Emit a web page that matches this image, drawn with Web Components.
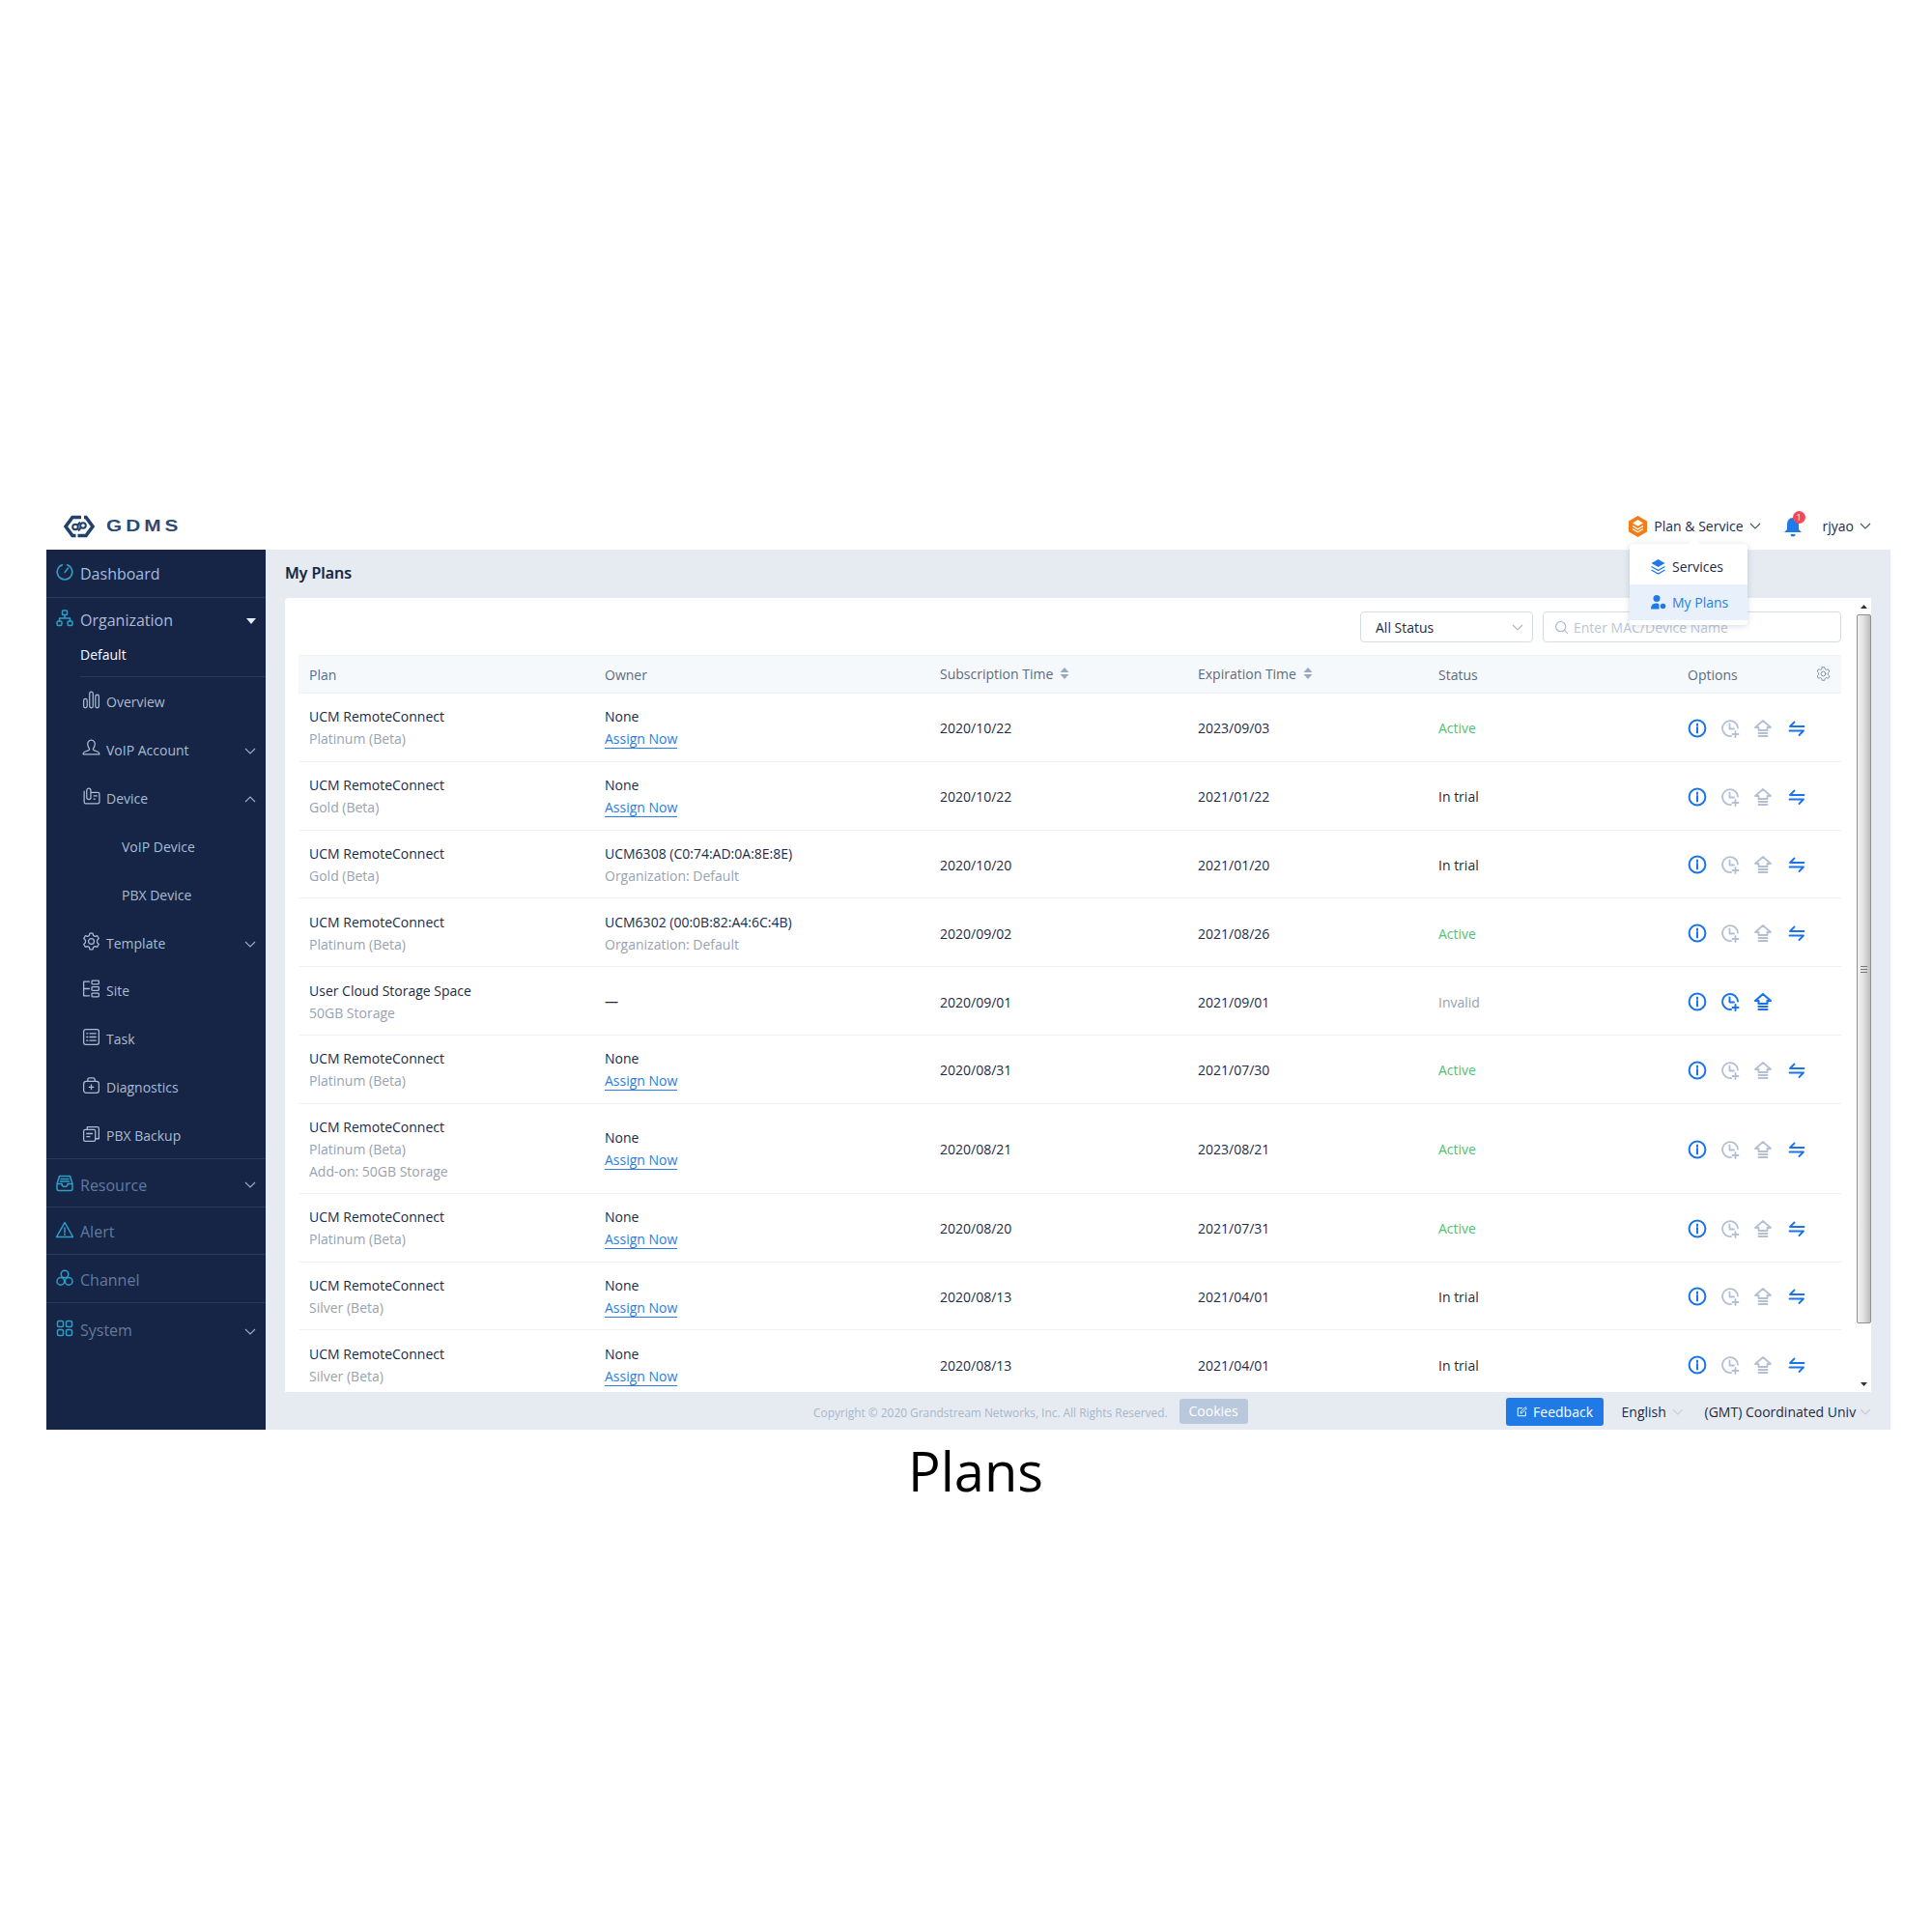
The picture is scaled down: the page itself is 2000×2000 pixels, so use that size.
<!DOCTYPE html>
<html>
<head>
<meta charset="utf-8">
<title>Plans</title>
<style>
    html, body { margin: 0; background: #fff; }
    body { font-family: 'Open Sans', sans-serif; color: #1c2b45; min-height: 2000px; }
</style>
</head>
<body>
<gdms-shell>
    <top-bar slot="top"></top-bar>
    <side-nav slot="side">
        <side-item icon="gauge" kind="top" h="50">Dashboard</side-item>
        <side-item icon="org" kind="top" h="40" chevron="caret" line="none" pt="5">Organization</side-item>
        <side-item kind="current" h="42">Default</side-item>
        <side-item icon="bars" kind="sub" h="50">Overview</side-item>
        <side-item icon="person" kind="sub" h="50" chevron="down" pt="1">VoIP Account</side-item>
        <side-item icon="device" kind="sub" h="50" chevron="up">Device</side-item>
        <side-item kind="leaf" h="50">VoIP Device</side-item>
        <side-item kind="leaf" h="50">PBX Device</side-item>
        <side-item icon="gear" kind="sub" h="49" chevron="down" pt="1">Template</side-item>
        <side-item icon="site" kind="sub" h="50">Site</side-item>
        <side-item icon="task" kind="sub" h="50">Task</side-item>
        <side-item icon="kit" kind="sub" h="50">Diagnostics</side-item>
        <side-item icon="copy" kind="sub" h="50" line="full">PBX Backup</side-item>
        <side-item icon="inbox" kind="dim" h="50" chevron="down" line="full" pt="4">Resource</side-item>
        <side-item icon="alert" kind="dim" h="49" line="full" pt="0">Alert</side-item>
        <side-item icon="rings" kind="dim" h="50" line="full" pt="2">Channel</side-item>
        <side-item icon="grid" kind="dim" h="56" chevron="down" line="none" pt="0">System</side-item>
    </side-nav>
    <plans-page slot="main"></plans-page>
    <page-footer slot="foot"></page-footer>
    <plan-menu slot="over"></plan-menu>
</gdms-shell>
<page-caption>Plans</page-caption>

<script>
// Stroke icons, all on a 20x20 box unless the caller passes another one.
const ICONS = {
    gauge: '<path d="M12.500 2.800a7.800 7.800 0 1 1-5 0"/><path d="M10 10.500 13.500 6"/>',
    org: '<rect x="7.500" y="2" width="5" height="4.500" rx=".8"/><rect x="2" y="13" width="5" height="4.500" rx="1.500"/><rect x="13" y="13" width="5" height="4.500" rx="1.500"/><path d="M10 6.500V10M4.500 13v-3h11v3"/>',
    bars: '<rect x="2.500" y="9" width="3.400" height="9" rx="1.700"/><rect x="8.300" y="2" width="3.400" height="16" rx="1.700"/><rect x="14.100" y="5" width="3.400" height="13" rx="1.700"/>',
    person: '<path d="M6.500 6.500a3.600 3.600 0 1 1 7 0c0 2-1 3-1.600 4-.4.8.2 1.400 1.200 1.800l3.400 1.300c1 .4 1.500 1 1.500 2.400H2c0-1.400.5-2 1.500-2.400l3.400-1.300c1-.4 1.600-1 1.200-1.800-.6-1-1.600-2-1.600-4Z"/>',
    device: '<path d="M3 5v10.500c0 1 .6 1.500 1.500 1.500h12c.9 0 1.500-.5 1.500-1.500V7.500c0-1-.6-1.500-1.500-1.500H10"/><rect x="5.500" y="2" width="4" height="11" rx="2"/><path d="M12.500 9.500h3M12.500 12.500h1"/>',
    gear: '<circle cx="10" cy="10" r="2.800"/><path d="M8.500 2h3l.5 2.200 1.700 1 2.200-.7 1.500 2.600-1.600 1.600v2.600l1.600 1.600-1.500 2.600-2.200-.7-1.700 1-.5 2.200h-3l-.5-2.200-1.700-1-2.200.7-1.500-2.600 1.600-1.600V8.700L2.600 7.100l1.500-2.600 2.200.7 1.700-1Z"/>',
    site: '<path d="M8 3H2.500v14H8M2.500 10H8"/><rect x="10.500" y="2" width="7" height="3.600" rx=".8"/><rect x="10.500" y="8.200" width="7" height="3.600" rx=".8"/><rect x="10.500" y="14.400" width="7" height="3.600" rx=".8"/>',
    task: '<rect x="2.500" y="2.500" width="15" height="15" rx="2"/><path d="M5.500 6.500h1M5.500 10h1M5.500 13.500h1M8.500 6.500h6M8.500 10h6M8.500 13.500h6"/>',
    kit: '<rect x="2.500" y="6" width="15" height="11.500" rx="2.500"/><path d="M6.500 6V4.500c0-1 .6-1.800 1.800-1.800h3.400c1.200 0 1.800.8 1.800 1.800V6M10 9.500v4.500M7.800 11.700h4.400"/>',
    copy: '<rect x="2.500" y="6" width="11.500" height="11.500" rx="1.500"/><path d="M6 6V3.500h10c1 0 1.500.5 1.500 1.500v10H14M5.500 10h5.500M5.500 13h3"/>',
    inbox: '<path d="M4.500 2.500h11l2.500 8v5c0 1.200-.8 2-2 2H4c-1.200 0-2-.8-2-2v-5ZM2 10.500h5c0 2 1.300 3 3 3s3-1 3-3h5M6 5.500h8M5.500 8h9"/>',
    alert: '<path d="M10 2.500 18.500 17.500h-17Z"/><path d="M10 8v5M10 14.500v1"/>',
    rings: '<circle cx="10" cy="6" r="3.800"/><circle cx="5.800" cy="13.400" r="3.800"/><circle cx="14.200" cy="13.400" r="3.800"/>',
    grid: '<rect x="2.500" y="2.500" width="6" height="6" rx="1.500"/><rect x="11.500" y="2.500" width="6" height="6" rx="1.500"/><rect x="2.500" y="11.500" width="6" height="6" rx="1.500"/><rect x="11.500" y="11.500" width="6" height="6" rx="1.500"/>',
    info: '<circle cx="10" cy="10" r="8.400"/><path d="M10 9v5.500M10 5.400v1.700"/>',
    clockplus: '<path d="M11 18a8 8 0 1 1 7-8.500"/><path d="M9.500 5.500V10.500H14M15.500 13v6M12.500 16h6"/>',
    homeup: '<path d="M10 2 18 9H14.500v3H5.500V9H2Z"/><path d="M5.500 15h9M5.500 18h9"/>',
    swap: '<path d="M3 8H17.500M3 8 7.500 3.500M2.500 12.500H17M17 12.500 12.500 17"/>',
    search: '<circle cx="9" cy="9" r="6"/><path d="M13.500 13.500 17 17"/>',
    edit: '<path d="M16 10v6.500H3.500V4H10"/><path d="M8 12l.5-2.500L15.500 2.500l2 2L10.500 11.500Z"/>'
};

function svgIcon(name, size, color, width) {
    return `<svg width="${size}" height="${size}" viewBox="0 0 20 20" fill="none" stroke="${color}" stroke-width="${width || 1.2}" stroke-linecap="round" stroke-linejoin="round">${ICONS[name]}</svg>`;
}

function chevron(color, dir) {
    const d = dir === 'up' ? 'M1 7 6 2l5 5' : 'M1 2l5 5 5-5';
    return `<svg width="12" height="9" viewBox="0 0 12 9" fill="none" stroke="${color}" stroke-width="1.1"><path d="${d}"/></svg>`;
}

class GdmsShell extends HTMLElement {
    constructor() {
        super();
        this.attachShadow({ mode: 'open' });
        this.shadowRoot.innerHTML = `
            <style>
                :host { display: block; width: 1909px; margin: 530px 0 0 48px; position: relative; }
                .body { display: grid; grid-template-columns: 227px 1fr; height: 911px; background: #e6ebf2; }
                .main { display: flex; flex-direction: column; min-width: 0; }
            </style>
            <slot name="top"></slot>
            <div class="body">
                <slot name="side"></slot>
                <div class="main">
                    <slot name="main"></slot>
                    <slot name="foot"></slot>
                </div>
            </div>
            <slot name="over"></slot>
        `;
    }
}

class TopBar extends HTMLElement {
    constructor() {
        super();
        this.attachShadow({ mode: 'open' });
        this.shadowRoot.innerHTML = `
            <style>
                :host { display: flex; align-items: center; height: 39px; box-sizing: border-box; padding-bottom: 10px; background: #fff; font-size: 14px; color: #1c2b45; }
                .logo { display: flex; align-items: center; gap: 11px; margin-left: 17px; }
                .word { font-family: 'Liberation Sans', sans-serif; font-weight: 700; font-size: 16px; letter-spacing: 3.100px; color: #2a4a76; transform: scaleX(1.3); transform-origin: left center; }
                .right { margin-left: auto; display: flex; align-items: center; }
                .plan { display: flex; align-items: center; gap: 6px; margin-right: 23px; }
                .bell { position: relative; width: 20px; height: 24px; margin-right: 21px; }
                .badge { position: absolute; left: 10px; top: -4px; width: 13px; height: 13px; border-radius: 50%; background: #f5475b; color: #fff; font-size: 9px; line-height: 13px; text-align: center; }
                .user { display: flex; align-items: center; gap: 6px; margin-right: 20px; }
            </style>
            <div class="logo">
                <svg width="34" height="24" viewBox="0 0 34 24" fill="none" stroke="#21406c" stroke-width="3.600" stroke-linejoin="miter">
                    <path d="M19 2.500H10L3 12l7 9.500h3.500"/>
                    <path d="M15.500 21.500H24l7-9.500-7-9.500h-2"/>
                    <circle cx="13" cy="12.500" r="2.800" stroke-width="2"/>
                    <circle cx="21" cy="11" r="2.800" stroke-width="2"/>
                    <path stroke-width="2" d="M15.500 10.500 18 7.500M18.500 13.500 16 16.500"/>
                </svg>
                <span class="word">GDMS</span>
            </div>
            <div class="right">
                <div class="plan">
                    <svg width="21" height="24" viewBox="0 0 21 24">
                        <path d="M10.500 1 20 6.500v11L10.500 23 1 17.500v-11Z" fill="#f57c14"/>
                        <path d="M10.500 5 16 8.500l-5.500 3.300L5 8.500Z" fill="#fff"/>
                        <path d="M5 11.500l5.500 3.300 5.500-3.300M5 14.500l5.500 3.300 5.500-3.300" fill="none" stroke="#fff" stroke-width="1.300"/>
                    </svg>
                    <span>Plan &amp; Service</span>
                    ${chevron('#44546a')}
                </div>
                <div class="bell">
                    <svg width="20" height="24" viewBox="0 0 20 24"><path d="M10 3c4 0 6 3 6 7v5l3 3H1l3-3v-5c0-4 2-7 6-7Z" fill="#1f7ae8"/><path d="M7.500 20h5a2.500 2.500 0 0 1-5 0Z" fill="#1f7ae8"/></svg>
                    <span class="badge">1</span>
                </div>
                <div class="user"><span>rjyao</span>${chevron('#44546a')}</div>
            </div>
        `;
    }
}

class SideNav extends HTMLElement {
    constructor() {
        super();
        this.attachShadow({ mode: 'open' });
        this.shadowRoot.innerHTML = `
            <style>
                :host { display: flex; flex-direction: column; background: #162546; overflow: hidden; }
            </style>
            <slot></slot>
        `;
    }
}

class SideItem extends HTMLElement {
    connectedCallback() {
        if (this.shadowRoot) return;
        this.attachShadow({ mode: 'open' });
        const kind = this.getAttribute('kind') || 'sub';
        const h = this.getAttribute('h') || 50;
        const pt = this.getAttribute('pt') || 0;
        const icon = this.getAttribute('icon');
        const chev = this.getAttribute('chevron');
        const line = this.getAttribute('line') || (kind === 'top' ? 'full' : kind === 'current' ? 'inset' : 'none');
        const teal = '#2f9fc8';
        const isTop = kind === 'top' || kind === 'dim';
        let chevHtml = '';
        if (chev === 'caret') chevHtml = '<svg width="10" height="6" viewBox="0 0 10 6"><path d="M0 0h10L5 6Z" fill="#e6ecf4"/></svg>';
        else if (chev) chevHtml = chevron('#9fb0c8', chev);
        this.shadowRoot.innerHTML = `
            <style>
                :host { display: flex; align-items: center; height: ${h}px; box-sizing: border-box; position: relative; flex: none; padding-top: ${pt}px; }
                :host([kind="top"]), :host([kind="dim"]) { font-size: 16px; color: #a8bdd6; padding-left: 9px; }
                :host([kind="dim"]) { color: #64799b; }
                :host([kind="sub"]) { font-size: 14px; color: #a9bcd4; padding-left: 36px; }
                :host([kind="leaf"]) { font-size: 14px; color: #a9bcd4; padding-left: 78px; }
                :host([kind="current"]) { font-size: 14px; color: #fff; padding-left: 35px; padding-bottom: 6px; }
                .ic { display: inline-flex; margin-right: ${isTop ? 6 : 5}px; margin-top: -4px; }
                .chev { position: absolute; right: 10px; top: 50%; margin-top: ${pt > 4 ? 1 : -3}px; display: inline-flex; }
                .line { position: absolute; right: 0; bottom: 0; height: 1px; background: #263a5e; left: ${line === 'inset' ? 35 : 0}px; }
            </style>
            ${icon ? `<span class="ic">${svgIcon(icon, isTop ? 20 : 21, isTop ? teal : '#a9bcd4', isTop ? 1.5 : 1.2)}</span>` : ''}
            <slot></slot>
            ${chevHtml ? `<span class="chev">${chevHtml}</span>` : ''}
            ${line !== 'none' ? '<span class="line"></span>' : ''}
        `;
    }
}

const PLAN_ROWS = [
    { plan: ['UCM RemoteConnect', 'Platinum (Beta)'], owner: ['None'], sub: '2020/10/22', exp: '2023/09/03', status: 'Active' },
    { plan: ['UCM RemoteConnect', 'Gold (Beta)'], owner: ['None'], sub: '2020/10/22', exp: '2021/01/22', status: 'In trial' },
    { plan: ['UCM RemoteConnect', 'Gold (Beta)'], owner: ['UCM6308 (C0:74:AD:0A:8E:8E)', 'Organization: Default'], sub: '2020/10/20', exp: '2021/01/20', status: 'In trial' },
    { plan: ['UCM RemoteConnect', 'Platinum (Beta)'], owner: ['UCM6302 (00:0B:82:A4:6C:4B)', 'Organization: Default'], sub: '2020/09/02', exp: '2021/08/26', status: 'Active' },
    { plan: ['User Cloud Storage Space', '50GB Storage'], owner: ['—'], sub: '2020/09/01', exp: '2021/09/01', status: 'Invalid', storage: true },
    { plan: ['UCM RemoteConnect', 'Platinum (Beta)'], owner: ['None'], sub: '2020/08/31', exp: '2021/07/30', status: 'Active' },
    { plan: ['UCM RemoteConnect', 'Platinum (Beta)', 'Add-on: 50GB Storage'], owner: ['None'], sub: '2020/08/21', exp: '2023/08/21', status: 'Active' },
    { plan: ['UCM RemoteConnect', 'Platinum (Beta)'], owner: ['None'], sub: '2020/08/20', exp: '2021/07/31', status: 'Active' },
    { plan: ['UCM RemoteConnect', 'Silver (Beta)'], owner: ['None'], sub: '2020/08/13', exp: '2021/04/01', status: 'In trial' },
    { plan: ['UCM RemoteConnect', 'Silver (Beta)'], owner: ['None'], sub: '2020/08/13', exp: '2021/04/01', status: 'In trial' }
];

class PlansPage extends HTMLElement {
    constructor() {
        super();
        this.attachShadow({ mode: 'open' });
        this.shadowRoot.innerHTML = `
            <style>
                :host { display: flex; flex-direction: column; height: 872px; padding-left: 20px; box-sizing: border-box; }
                h1 { font-size: 16px; font-weight: 600; line-height: 48px; height: 50px; margin: 0; color: #14233f; -webkit-text-stroke: .2px #14233f; }
                .card { display: flex; width: 1642px; height: 822px; background: #fff; border-radius: 4px 0 0 0; overflow: hidden; box-sizing: border-box; }
                .inner { flex: 1; min-width: 0; padding: 14px 0 0 14px; width: 1597px; }
                .tools { display: flex; justify-content: flex-end; gap: 10px; height: 32px; margin: 0 16px 13px 0; font-size: 14px; }
                .box { display: flex; align-items: center; box-sizing: border-box; height: 32px; border: 1.500px solid #d5dce6; border-radius: 4px; color: #1c2b45; }
                .select { width: 179px; padding: 0 9px 0 15px; justify-content: space-between; }
                .search { width: 309px; padding-left: 10px; gap: 4px; color: #bcc5d2; }
                plan-scrollbar { flex: none; }
            </style>
            <h1>My Plans</h1>
            <div class="card">
                <div class="inner">
                    <div class="tools">
                        <div class="box select"><span>All Status</span>${chevron('#a9b5c6')}</div>
                        <div class="box search">${svgIcon('search', 17, '#a9b5c6', 1.3)}<span>Enter MAC/Device Name</span></div>
                    </div>
                    <plans-table></plans-table>
                </div>
                <plan-scrollbar></plan-scrollbar>
            </div>
        `;
    }
}

class PlansTable extends HTMLElement {
    constructor() {
        super();
        this.attachShadow({ mode: 'open' });
    }

    connectedCallback() {
        const sort = `<svg width="10" height="12" viewBox="0 0 10 12" fill="#9aa9c0"><path d="M5 0 9.500 5H.5ZM5 12 .5 7h9Z"/></svg>`;
        const head = `
            <div class="row head">
                <div>Plan</div>
                <div>Owner</div>
                <div class="sortable">Subscription Time ${sort}</div>
                <div class="sortable">Expiration Time ${sort}</div>
                <div>Status</div>
                <div class="opt">Options <span class="cog">${svgIcon('gear', 17, '#7d8ca3', 1.1)}</span></div>
            </div>`;
        this.shadowRoot.innerHTML = `
            <style>
                :host { display: block; width: 1597px; font-size: 14px; color: #1c2b45; }
                .row { display: grid; grid-template-columns: 306px 347px 267px 249px 258px 1fr; align-items: center; padding: 2px 0 0 11px; border-bottom: 1px solid #eef1f5; box-sizing: border-box; min-height: 70.800px; }
                .head { min-height: 40px; height: 40px; padding-top: 0; background: #f6f9fc; color: #5c6b80; border-top: 1px solid #f1f4f8; }
                .sortable { display: flex; align-items: center; gap: 7px; margin-top: -2px; }
                .opt { display: flex; justify-content: space-between; align-items: center; padding-right: 10px; }
                .cog { display: inline-flex; margin-top: -2px; }
                .tall { min-height: 93px; }
                .stack { display: flex; flex-direction: column; gap: 3px; line-height: 20px; }
                .muted { color: #98a2b0; }
                a { color: #2a7ce6; text-decoration: none; border-bottom: 1px solid #2a7ce6; line-height: 19px; align-self: flex-start; }
                .Active { color: #4fc276; }
                .Invalid { color: #98a2b0; }
                .icons { display: flex; gap: 14px; align-items: center; }
                .icons svg { display: block; }
                .icons svg:nth-child(4) { margin-left: 1px; }
            </style>
            ${head}
            ${PLAN_ROWS.map(r => this.rowHtml(r)).join('')}
        `;
    }

    rowHtml(r) {
        const blue = '#1a73e8';
        const grey = '#b3c0d3';
        const owner = r.owner[0] === 'None'
            ? `<div class="stack"><span>None</span><a>Assign Now</a></div>`
            : `<div class="stack">${r.owner.map((t, i) => `<span class="${i ? 'muted' : ''}">${t}</span>`).join('')}</div>`;
        const opts = r.storage
            ? svgIcon('info', 20, blue, 2) + svgIcon('clockplus', 20, blue, 2) + svgIcon('homeup', 20, blue, 2.2)
            : svgIcon('info', 20, blue, 2) + svgIcon('clockplus', 20, grey, 1.8) + svgIcon('homeup', 20, grey, 1.8) + svgIcon('swap', 20, blue, 1.8);
        return `
            <div class="row ${r.plan.length > 2 ? 'tall' : ''}">
                <div class="stack">${r.plan.map((t, i) => `<span class="${i ? 'muted' : ''}">${t}</span>`).join('')}</div>
                ${owner}
                <div>${r.sub}</div>
                <div>${r.exp}</div>
                <div class="${r.status}">${r.status}</div>
                <div class="icons">${opts}</div>
            </div>`;
    }
}

class PlanScrollbar extends HTMLElement {
    constructor() {
        super();
        this.attachShadow({ mode: 'open' });
        this.shadowRoot.innerHTML = `
            <style>
                :host { display: flex; flex-direction: column; width: 15px; height: 822px; align-items: stretch; background: #fff; }
                .arrow { height: 17px; display: flex; align-items: center; justify-content: center; flex: none; }
                .thumb { height: 734px; flex: none; box-sizing: border-box; border: 1px solid #8f8f8f; border-radius: 2px; background: linear-gradient(90deg, #f2f2f2, #e2e2e2 45%, #bdbdbd); display: flex; align-items: center; justify-content: center; }
                .grip { width: 7px; height: 7px; background: repeating-linear-gradient(180deg, #777 0 1px, transparent 1px 3px); }
                .track { flex: 1; }
            </style>
            <div class="arrow"><svg width="7" height="4" viewBox="0 0 7 4"><path d="M3.500 0 7 4H0Z" fill="#333"/></svg></div>
            <div class="thumb"><span class="grip"></span></div>
            <div class="track"></div>
            <div class="arrow"><svg width="7" height="4" viewBox="0 0 7 4"><path d="M0 0h7L3.500 4Z" fill="#333"/></svg></div>
        `;
    }
}

class PageFooter extends HTMLElement {
    constructor() {
        super();
        this.attachShadow({ mode: 'open' });
        this.shadowRoot.innerHTML = `
            <style>
                :host { display: flex; align-items: center; height: 39px; box-sizing: border-box; padding: 2px 0 0 567px; font-size: 14px; color: #1c2b45; }
                .copy { font-size: 11.900px; color: #a9b6c8; margin-right: 12px; white-space: nowrap; }
                .cookies { background: #b9c8dc; color: #fff; font-size: 14px; width: 71px; height: 26px; line-height: 25px; text-align: center; border-radius: 3px; margin-top: -2px; }
                .feedback { display: flex; align-items: center; justify-content: center; gap: 5px; margin-left: 267px; width: 101px; height: 29px; background: #1f7ae8; color: #fff; border-radius: 3px; }
                .lang { display: flex; align-items: center; gap: 6px; margin-left: 19px; width: 64px; }
                .zone { display: flex; align-items: center; gap: 6px; margin-left: 22px; }
                .clip { width: 154px; white-space: nowrap; }
            </style>
            <span class="copy">Copyright © 2020 Grandstream Networks, Inc. All Rights Reserved.</span>
            <span class="cookies">Cookies</span>
            <span class="feedback">${svgIcon('edit', 13, '#fff', 1.5)}<span>Feedback</span></span>
            <span class="lang"><span>English</span>${chevron('#c3ccd8')}</span>
            <span class="zone"><span class="clip">(GMT) Coordinated Univ</span>${chevron('#c3ccd8')}</span>
        `;
    }
}

class PlanMenu extends HTMLElement {
    constructor() {
        super();
        this.attachShadow({ mode: 'open' });
        this.shadowRoot.innerHTML = `
            <style>
                :host { position: absolute; left: 1639px; top: 33px; width: 122px; height: 84px; background: #fff; border-radius: 4px; box-shadow: 0 1px 6px rgba(60,80,110,.22); font-size: 14px; display: block; }
                :host::before { content: ''; position: absolute; left: 62px; top: -4px; width: 9px; height: 9px; background: #fff; transform: rotate(45deg); }
                .item { display: flex; align-items: center; gap: 6px; padding-left: 21px; position: relative; box-sizing: border-box; }
                .a { height: 42px; padding-top: 4px; color: #1c2b45; }
                .b { height: 37px; color: #2a7ce6; background: #e8f1fb; }
            </style>
            <div class="item a">
                <svg width="17" height="17" viewBox="0 0 17 17"><path d="M8.500 1 15.500 5 8.500 9 1.500 5Z" fill="#1f7ae8"/><path d="M1.500 8.500l7 4 7-4M1.500 12l7 4 7-4" fill="none" stroke="#1f7ae8" stroke-width="1.400"/></svg>
                <span>Services</span>
            </div>
            <div class="item b">
                <svg width="17" height="17" viewBox="0 0 17 17" fill="#1f7ae8"><circle cx="7" cy="4.500" r="3.500"/><path d="M1 15.500c0-4 2-6 6-6 1.500 0 2 .5 2.500 1.500V15.500Z"/><circle cx="13.500" cy="12.500" r="2.800"/></svg>
                <span>My Plans</span>
            </div>
        `;
    }
}

class PageCaption extends HTMLElement {
    constructor() {
        super();
        this.attachShadow({ mode: 'open' });
        this.shadowRoot.innerHTML = `
            <style>
                :host { display: block; text-align: center; font-size: 56px; line-height: 76px; color: #000; padding-left: 20px; margin-top: 4px; }
            </style>
            <slot></slot>
        `;
    }
}

customElements.define('gdms-shell', GdmsShell);
customElements.define('top-bar', TopBar);
customElements.define('side-nav', SideNav);
customElements.define('side-item', SideItem);
customElements.define('plans-table', PlansTable);
customElements.define('plan-scrollbar', PlanScrollbar);
customElements.define('plans-page', PlansPage);
customElements.define('page-footer', PageFooter);
customElements.define('plan-menu', PlanMenu);
customElements.define('page-caption', PageCaption);
</script>
</body>
</html>
